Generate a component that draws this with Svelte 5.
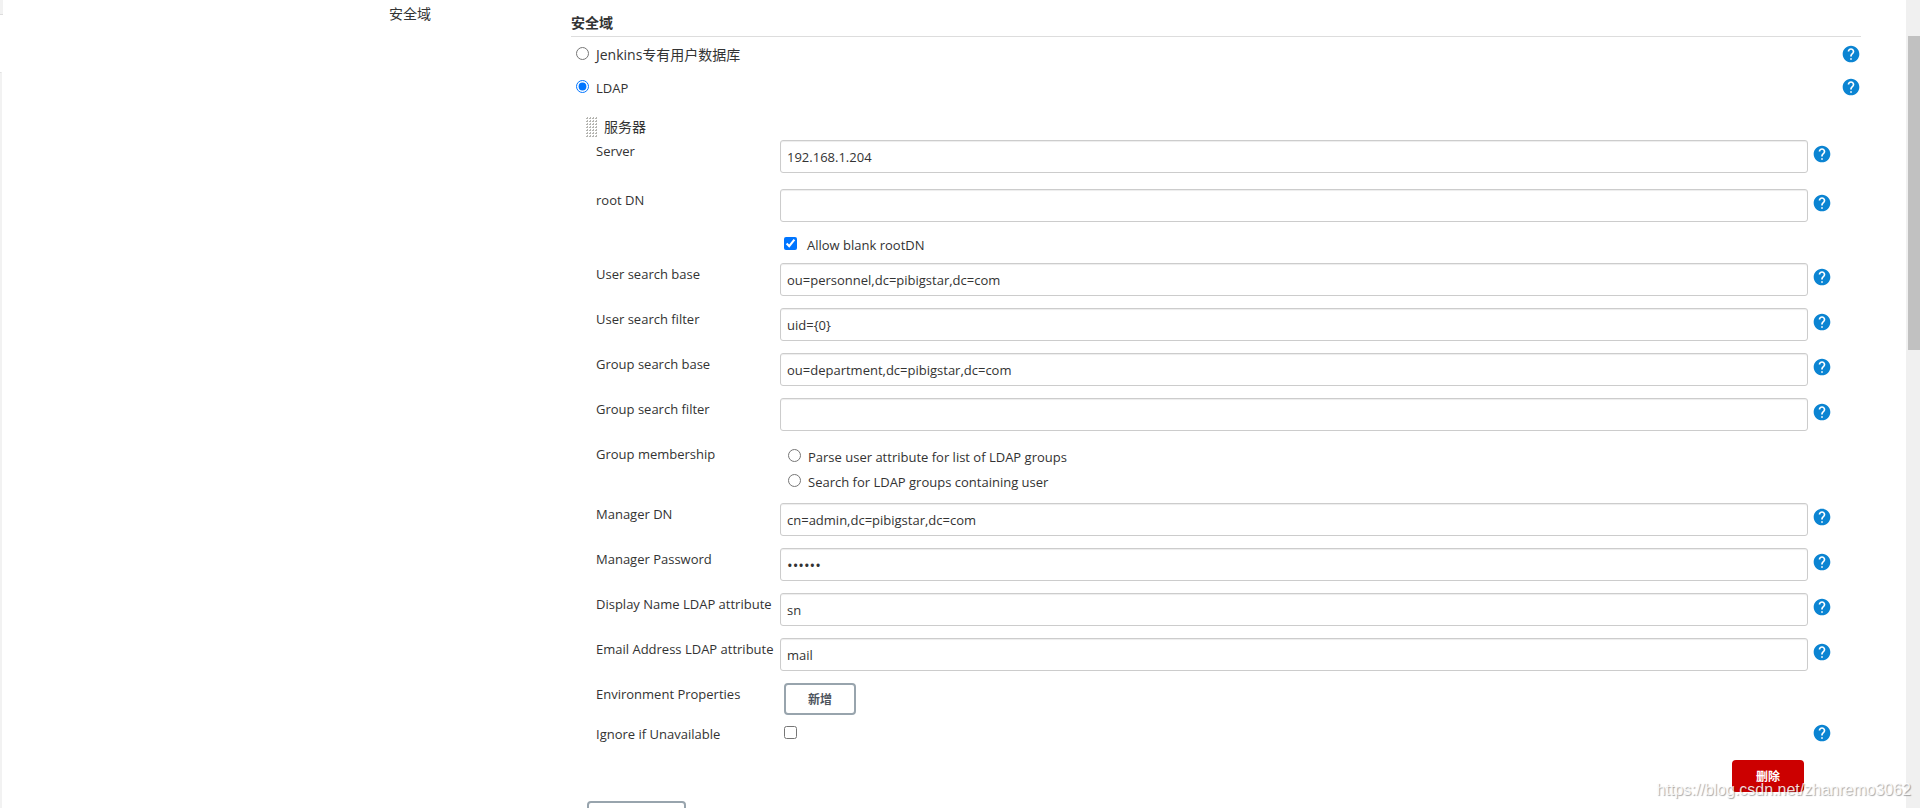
<script>
  const searchFields = [
    { id: 'user-base', label: 'User search base', value: 'ou=personnel,dc=pibigstar,dc=com' },
    { id: 'user-filter', label: 'User search filter', value: 'uid={0}' },
    { id: 'group-base', label: 'Group search base', value: 'ou=department,dc=pibigstar,dc=com' },
    { id: 'group-filter', label: 'Group search filter', value: '' }
  ];
  const managerFields = [
    { id: 'manager-dn', label: 'Manager DN', value: 'cn=admin,dc=pibigstar,dc=com' },
    { id: 'manager-password', label: 'Manager Password', value: 'secret', type: 'password' },
    { id: 'display-name', label: 'Display Name LDAP attribute', value: 'sn' },
    { id: 'email', label: 'Email Address LDAP attribute', value: 'mail' }
  ];
</script>

{#snippet help(topic)}
  <button class="help" type="button" aria-label={topic}>
    <svg viewBox="0 0 24 24" width="20" height="20" aria-hidden="true">
      <path fill="#0b84d2" d="M12 2C6.48 2 2 6.48 2 12s4.48 10 10 10 10-4.48 10-10S17.520 2 12 2zm1 17h-2v-2h2v2zm2.070-7.750l-.9.920C13.450 12.900 13 13.500 13 15h-2v-.5c0-1.100.450-2.100 1.170-2.830l1.240-1.260c.370-.360.590-.860.590-1.410 0-1.100-.9-2-2-2s-2 .9-2 2H8c0-2.210 1.790-4 4-4s4 1.790 4 4c0 .880-.360 1.680-.930 2.250z" />
    </svg>
  </button>
{/snippet}

{#snippet field(f)}
  <div class="row" class:tall={f.tall}>
    <label class="name" for={f.id}>{f.label}</label>
    <input class="text" id={f.id} type={f.type ?? 'text'} value={f.value} />
    {@render help(f.label)}
  </div>
{/snippet}

<div class="page">
  <aside class="side"></aside>
  <main class="config">
    <div class="section-name">安全域</div>
    <section class="realm">
      <h2>安全域</h2>
      <div class="choice">
        <label class="mixed"><input type="radio" name="realm" />Jenkins专有用户数据库</label>
        {@render help('Jenkins专有用户数据库')}
      </div>
      <div class="choice">
        <label><input type="radio" name="realm" checked />LDAP</label>
        {@render help('LDAP')}
      </div>

      <div class="server">
        <div class="server-title">
          <svg class="grip" width="12" height="20" viewBox="0 0 12 20" aria-hidden="true">
            <defs>
              <pattern id="dots" width="3" height="3" patternUnits="userSpaceOnUse">
                <path d="M1 0h1v1h-1zM0 1h2v1h-2z" fill="#b4b4b0" />
              </pattern>
            </defs>
            <rect width="12" height="20" fill="url(#dots)" />
          </svg>
          <span>服务器</span>
        </div>
        {@render field({ id: 'server', label: 'Server', value: '192.168.1.204', tall: true })}
        {@render field({ id: 'root-dn', label: 'root DN', value: '', tall: true })}
        <div class="row blank">
          <label class="check"><input type="checkbox" checked />Allow blank rootDN</label>
        </div>
        {#each searchFields as f (f.id)}
          {@render field(f)}
        {/each}
        <div class="row membership">
          <span class="name">Group membership</span>
          <div class="options">
            <label><input type="radio" name="membership" />Parse user attribute for list of LDAP groups</label>
            <label><input type="radio" name="membership" />Search for LDAP groups containing user</label>
          </div>
        </div>
        {#each managerFields as f (f.id)}
          {@render field(f)}
        {/each}
        <div class="row env">
          <span class="name">Environment Properties</span>
          <div><button class="plain" type="button">新增</button></div>
        </div>
        <div class="row ignore">
          <label class="name" for="ignore">Ignore if Unavailable</label>
          <div class="check"><input id="ignore" type="checkbox" /></div>
          {@render help('Ignore if Unavailable')}
        </div>
        <div class="remove"><button class="danger" type="button">删除</button></div>
      </div>
      <button class="plain add" type="button" aria-label="Add Server"></button>
    </section>
  </main>
  <div class="track"><div class="thumb"></div></div>
  <div class="watermark">https://blog.csdn.net/zhanremo3062</div>
</div>

<style>
  :global(body) {
    margin: 0;
    background: #fff;
  }
  .page {
    position: relative;
    display: flex;
    height: 100vh;
    overflow: hidden;
    color: #333;
    font: 13px/20px "Open Sans", "Noto Sans CJK SC", sans-serif;
  }
  .side {
    flex: none;
    box-sizing: border-box;
    width: 2px;
    margin-top: 72px;
    border-top: 1px solid #ddd;
    border-right: 2px solid #f2f2f2;
  }
  .side::before {
    content: "";
    position: absolute;
    top: 0;
    left: 0;
    width: 3px;
    height: 14px;
    background: #f2f2f2;
    border-bottom: 1px solid #ddd;
  }
  .config {
    flex: 1;
    display: grid;
    grid-template-columns: 182px minmax(0, 1fr);
    align-content: start;
    padding: 4px 45px 0 387px;
  }
  .section-name,
  h2,
  .mixed,
  .server-title {
    font-size: 14px;
  }
  h2 {
    margin: 0;
    padding: 9px 0 3px;
    border-bottom: 1px solid #ddd;
    line-height: 20px;
  }
  input {
    margin: 0;
    flex: none;
  }
  .choice {
    display: flex;
    justify-content: space-between;
    height: 33px;
    padding-left: 5px;
  }
  .choice label {
    display: flex;
    align-items: flex-start;
    padding-top: 8px;
  }
  .choice input {
    margin: 2px 7px 0 0;
  }
  .choice .help {
    margin-top: 7px;
  }
  .help {
    flex: none;
    width: 20px;
    height: 20px;
    padding: 0;
    border: 0;
    background: none;
  }
  .help svg {
    display: block;
  }
  .server {
    padding: 14px 29px 0 25px;
  }
  .server-title {
    display: flex;
    gap: 6px;
    margin: 0 0 3px -10px;
  }
  .row {
    display: grid;
    grid-template-columns: 184px minmax(0, 1fr) 20px;
    height: 45px;
  }
  .row.tall {
    height: 49px;
  }
  .name {
    padding-top: 1px;
    white-space: nowrap;
  }
  .text {
    box-sizing: border-box;
    width: calc(100% - 4px);
    height: 33px;
    padding: 0 6px;
    border: 1px solid #ccc;
    border-radius: 3px;
    box-shadow: inset 0 1px 1px rgba(0, 0, 0, 0.075);
    color: #333;
    font: inherit;
  }
  .text[type="password"] {
    font-size: 15px;
  }
  .row .help {
    margin-top: 4px;
  }
  .row.blank {
    height: 25px;
  }
  .blank .check {
    grid-column: 2;
    display: flex;
    align-items: flex-start;
    gap: 10px;
    margin-top: -3px;
    padding-left: 4px;
  }
  .blank input {
    margin-top: 2px;
  }
  .membership {
    height: 60px;
  }
  .options {
    padding-top: 4px;
  }
  .options label {
    display: flex;
    align-items: flex-start;
    gap: 7px;
    height: 25px;
    padding-left: 8px;
  }
  .options input {
    margin-top: 2px;
  }
  .plain {
    box-sizing: border-box;
    width: 72px;
    height: 32px;
    padding: 1px 0 0;
    border: 2px solid #98a4ad;
    border-radius: 4px;
    background: #fff;
    color: #4d545d;
    font: bold 12px/20px "Open Sans", "Noto Sans CJK SC", sans-serif;
  }
  .env .plain {
    margin-left: 4px;
  }
  .row.env {
    height: 40px;
  }
  .row.ignore {
    height: 37px;
  }
  .ignore .check {
    padding: 1px 4px;
  }
  .ignore .help {
    margin-top: 0;
  }
  .remove {
    display: flex;
    justify-content: flex-end;
    padding-right: 28px;
  }
  .danger {
    width: 72px;
    height: 32px;
    padding: 1px 0 0;
    border: 0;
    border-radius: 4px;
    background: #c00;
    color: #fff;
    font: bold 12px/20px "Open Sans", "Noto Sans CJK SC", sans-serif;
  }
  .add {
    width: 99px;
    display: block;
    margin: 9px 0 0 16px;
  }
  .track {
    flex: none;
    width: 14px;
    padding-top: 36px;
    background: #f0f0f0;
  }
  .thumb {
    height: 314px;
    margin-left: 2px;
    background: #c1c1c1;
  }
  .watermark {
    position: absolute;
    right: 9px;
    bottom: 8px;
    color: rgba(255, 255, 255, 0.85);
    font: 16px/20px "Liberation Sans", sans-serif;
    text-shadow: 1px 1px 1px rgba(0, 0, 0, 0.35);
    pointer-events: none;
  }
</style>
